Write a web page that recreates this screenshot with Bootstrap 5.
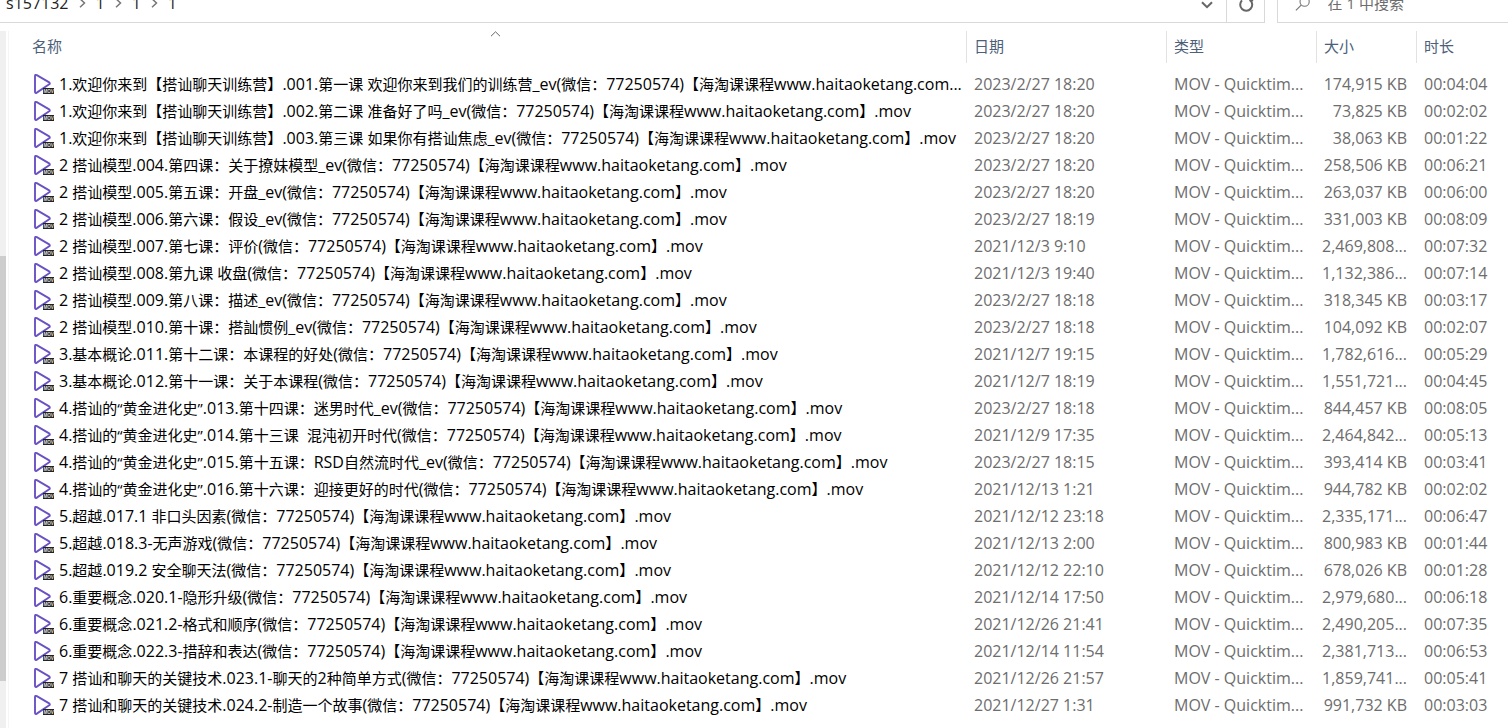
<!DOCTYPE html>
<html lang="zh-CN">
<head>
<meta charset="utf-8">
<meta name="viewport" content="width=device-width, initial-scale=1">
<title>1</title>
<link href="https://cdn.jsdelivr.net/npm/bootstrap@5.3.0/dist/css/bootstrap.min.css" rel="stylesheet">
<style>
  body { font-family: "Open Sans", "Noto Sans CJK SC", sans-serif; font-size: 15px; line-height: 26px; color: #000; background: #fff; }
  .latin { font-size: 16px; }
  .toolbar { height: 23px; }
  .tool-box { height: 40px; border: 1px solid #d9d9d9; }
  .crumbs { gap: 10px; padding-left: 6px; font-size: 16px; }
  .crumbs a { color: #222; text-decoration: none; }
  .tool-btn { border: 0; background: none; padding: 0; width: 38px; height: 38px; color: #666; }
  .tool-btn + .tool-btn { border-left: 1px solid #d9d9d9; }
  .search-box { width: 231px; margin-left: 12px; border-right: 0; padding-left: 17px; color: #777; }
  .search-box input { border: 0; outline: 0; background: none; min-width: 0; margin-left: 17px; padding: 0; }
  .search-box input::placeholder { color: #6d6d6d; opacity: 1; }
  .scroll-track { width: 6px; background: #f0f0f0; }
  .scroll-thumb { height: 61%; background: #cdcdcd; }
  .listing { border-left: 1px solid #f5f5f5; margin-left: 2px; }
  .files { table-layout: fixed; width: 100%; border-collapse: separate; border-spacing: 0; }
  .files th { height: 32px; padding: 0 0 2px 7px; font-weight: 400; color: #4c607a; border-left: 1px solid #e2e2e2; }
  .files th:first-child { border-left: 0; padding-left: 23px; }
  .files td { height: 27px; padding: 0 8px; font-size: 16px; color: #6d6d6d; white-space: pre; overflow: hidden; }
  .files td:first-child { padding: 0 0 0 24px; font-size: 15px; color: #000; }
  .files td.size { text-align: right; padding: 0 9px 0 0; }
  .files td:last-child { padding: 0 0 0 8px; }
  .files .head-gap td { height: 7px; padding: 0; }
  .file-name { white-space: pre; min-width: 0; }
  .w-date { width: 200px; } .w-type { width: 150px; } .w-size { width: 100px; } .w-time { width: 92px; }
  .sort-mark { top: 0; left: 50%; }
</style>
</head>
<body>
<div class="d-flex flex-column vh-100 overflow-hidden">
  <header class="toolbar d-flex align-items-end overflow-hidden flex-shrink-0">
    <div class="tool-box border-start-0 d-flex align-items-center flex-grow-1">
      <nav class="crumbs d-flex align-items-center flex-grow-1" aria-label="路径">
        <a href="#">s157132</a>
        <svg width="7" height="10" viewBox="0 0 7 10" fill="none" stroke="#777" stroke-width="1.5"><path d="M1 .8 5.5 5 1 9.2"/></svg>
        <a href="#">1</a>
        <svg width="7" height="10" viewBox="0 0 7 10" fill="none" stroke="#777" stroke-width="1.5"><path d="M1 .8 5.5 5 1 9.2"/></svg>
        <a href="#">1</a>
        <svg width="7" height="10" viewBox="0 0 7 10" fill="none" stroke="#777" stroke-width="1.5"><path d="M1 .8 5.5 5 1 9.2"/></svg>
        <a href="#">1</a>
      </nav>
      <button class="tool-btn" type="button" aria-label="以前的位置"><svg width="12" height="8" viewBox="0 0 12 8" fill="none" stroke="currentColor" stroke-width="2"><path d="M1 1.2 6 6.2 11 1.2"/></svg></button>
      <button class="tool-btn" type="button" aria-label="刷新"><svg width="16" height="16" viewBox="0 0 16 16" fill="none" stroke="currentColor" stroke-width="2"><path d="M12.2 3.2A6 6 0 1 1 4 3.4M12.2-1v4.2h3"/></svg></button>
    </div>
    <label class="tool-box search-box d-flex align-items-center">
      <svg width="17" height="17" viewBox="0 0 17 17" fill="none" stroke="currentColor" stroke-width="1.2"><circle cx="10.5" cy="6.5" r="5"/><path d="M7 10 1 16"/></svg>
      <input type="search" placeholder="在 1 中搜索" aria-label="搜索">
    </label>
  </header>
  <main class="d-flex flex-grow-1 pt-2 overflow-hidden">
    <div class="scroll-track d-flex flex-column flex-shrink-0">
      <div style="height:32.3%"></div>
      <div class="scroll-thumb"></div>
    </div>
    <div class="listing flex-grow-1 position-relative">
      <table class="files">
        <colgroup><col><col class="w-date"><col class="w-type"><col class="w-size"><col class="w-time"></colgroup>
        <thead><tr>
          <th scope="col" class="position-relative">名称<svg class="sort-mark position-absolute" width="15" height="7" viewBox="0 0 15 7" fill="none" stroke="#666"><path d="M3 5.2 7.5 .8 12 5.2"/></svg></th>
          <th scope="col">日期</th><th scope="col">类型</th><th scope="col">大小</th><th scope="col">时长</th>
        </tr></thead>
        <tbody id="rows"><tr class="head-gap"><td colspan="5"></td></tr></tbody>
      </table>
    </div>
  </main>
</div>
<svg class="d-none">
  <symbol id="mov" viewBox="0 0 22 22">
    <path d="M2 3.2Q2 1.2 3.8 2.2L16.2 9.4Q17.4 10.4 16.2 11.3L3.8 19.6Q2 20.7 2 18.8Z" fill="#fff" stroke="#6a51c4" stroke-width="1.9" stroke-linejoin="round"/>
    <rect x="10" y="15" width="11" height="6" fill="#222"/>
    <text x="10.4" y="19.8" font-family="Liberation Sans" font-size="4.6" font-weight="700" fill="#ddd">MOV</text>
  </symbol>
</svg>
<script>
  const tail = '(微信：77250574)【海淘课课程www.haitaoketang.com】.mov';
  const files = [
    ['1.欢迎你来到【搭讪聊天训练营】.001.第一课 欢迎你来到我们的训练营_ev(微信：77250574)【海淘课课程www.haitaoketang.com...', '2023/2/27 18:20', '174,915 KB', '00:04:04'],
    ['1.欢迎你来到【搭讪聊天训练营】.002.第二课 准备好了吗_ev' + tail, '2023/2/27 18:20', '73,825 KB', '00:02:02'],
    ['1.欢迎你来到【搭讪聊天训练营】.003.第三课 如果你有搭讪焦虑_ev' + tail, '2023/2/27 18:20', '38,063 KB', '00:01:22'],
    ['2 搭讪模型.004.第四课：关于撩妹模型_ev' + tail, '2023/2/27 18:20', '258,506 KB', '00:06:21'],
    ['2 搭讪模型.005.第五课：开盘_ev' + tail, '2023/2/27 18:20', '263,037 KB', '00:06:00'],
    ['2 搭讪模型.006.第六课：假设_ev' + tail, '2023/2/27 18:19', '331,003 KB', '00:08:09'],
    ['2 搭讪模型.007.第七课：评价' + tail, '2021/12/3 9:10', '2,469,808...', '00:07:32'],
    ['2 搭讪模型.008.第九课 收盘' + tail, '2021/12/3 19:40', '1,132,386...', '00:07:14'],
    ['2 搭讪模型.009.第八课：描述_ev' + tail, '2023/2/27 18:18', '318,345 KB', '00:03:17'],
    ['2 搭讪模型.010.第十课：搭訕惯例_ev' + tail, '2023/2/27 18:18', '104,092 KB', '00:02:07'],
    ['3.基本概论.011.第十二课：本课程的好处' + tail, '2021/12/7 19:15', '1,782,616...', '00:05:29'],
    ['3.基本概论.012.第十一课：关于本课程' + tail, '2021/12/7 18:19', '1,551,721...', '00:04:45'],
    ['4.搭讪的“黄金进化史”.013.第十四课：迷男时代_ev' + tail, '2023/2/27 18:18', '844,457 KB', '00:08:05'],
    ['4.搭讪的“黄金进化史”.014.第十三课  混沌初开时代' + tail, '2021/12/9 17:35', '2,464,842...', '00:05:13'],
    ['4.搭讪的“黄金进化史”.015.第十五课：RSD自然流时代_ev' + tail, '2023/2/27 18:15', '393,414 KB', '00:03:41'],
    ['4.搭讪的“黄金进化史”.016.第十六课：迎接更好的时代' + tail, '2021/12/13 1:21', '944,782 KB', '00:02:02'],
    ['5.超越.017.1 非口头因素' + tail, '2021/12/12 23:18', '2,335,171...', '00:06:47'],
    ['5.超越.018.3-无声游戏' + tail, '2021/12/13 2:00', '800,983 KB', '00:01:44'],
    ['5.超越.019.2 安全聊天法' + tail, '2021/12/12 22:10', '678,026 KB', '00:01:28'],
    ['6.重要概念.020.1-隐形升级' + tail, '2021/12/14 17:50', '2,979,680...', '00:06:18'],
    ['6.重要概念.021.2-格式和顺序' + tail, '2021/12/26 21:41', '2,490,205...', '00:07:35'],
    ['6.重要概念.022.3-措辞和表达' + tail, '2021/12/14 11:54', '2,381,713...', '00:06:53'],
    ['7 搭讪和聊天的关键技术.023.1-聊天的2种简单方式' + tail, '2021/12/26 21:57', '1,859,741...', '00:05:41'],
    ['7 搭讪和聊天的关键技术.024.2-制造一个故事' + tail, '2021/12/27 1:31', '991,732 KB', '00:03:03']
  ];
  // Latin runs are set one size above the Chinese text
  const mixed = s => s.replace(/[\x20-\x7e]+/g, '<span class="latin">$&</span>');
  document.getElementById('rows').insertAdjacentHTML('beforeend', files.map(([name, date, size, time]) =>
    `<tr><td><div class="d-flex align-items-center"><svg class="flex-shrink-0" width="22" height="22" aria-hidden="true"><use href="#mov"/></svg><span class="file-name ms-1">${mixed(name)}</span></div></td>` +
    `<td>${date}</td><td>MOV - Quicktim...</td><td class="size">${size}</td><td>${time}</td></tr>`).join(''));
</script>
<script src="https://cdn.jsdelivr.net/npm/bootstrap@5.3.0/dist/js/bootstrap.bundle.min.js"></script>
</body>
</html>
